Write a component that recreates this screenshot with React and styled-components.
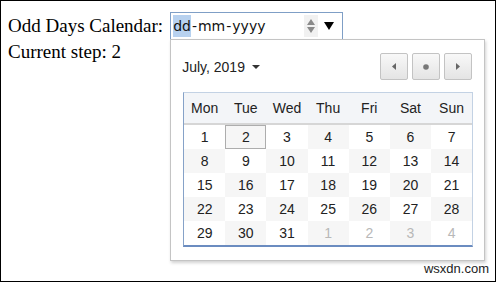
import React from 'react'
import styled, { createGlobalStyle } from 'styled-components'

const GlobalStyle = createGlobalStyle`
    html, body {
        margin: 0;
        padding: 0;
        background: #fff;
    }
`

const Frame = styled.div`
    position: relative;
    width: 496px;
    height: 282px;
    box-sizing: border-box;
    border: 1px solid #000;
    padding: 0 7px;
    font-family: "Liberation Serif", "Times New Roman", serif;
    font-size: 19px;
    color: #000;
    overflow: hidden;
`

const FieldRow = styled.div`
    display: flex;
    align-items: center;
    gap: 7px;
    margin-top: 11px;
    height: 28px;
`

const Label = styled.span`
    white-space: nowrap;
`

const DateField = styled.div`
    position: relative;
    width: 173px;
    height: 28px;
    box-sizing: border-box;
    border: 1px solid #7f9fc6;
    display: flex;
    align-items: center;
    padding-left: 2px;
    font-family: "DejaVu Sans", sans-serif;
    font-size: 14px;
    color: #111;
`

const Segment = styled.span`
    padding: 2px 0;
    background: ${({active}) => active ? '#b7d1ef' : 'transparent'};
    line-height: 18px;
`

const Dash = styled.span`
    margin: 0 1px;
`

const Spinner = styled.div`
    margin-left: auto;
    width: 14px;
    height: 22px;
    background: #f1f1f1;
    display: flex;
    flex-direction: column;
    align-items: center;
    justify-content: center;
    gap: 2px;
`

const DropArrow = styled.div`
    width: 0;
    height: 0;
    margin: 0 8px 0 6px;
    border-left: 5.5px solid transparent;
    border-right: 5.5px solid transparent;
    border-top: 8px solid #000;
`

const Popup = styled.div`
    position: absolute;
    top: 100%;
    left: -1px;
    width: 315px;
    height: 222px;
    box-sizing: border-box;
    background: #fff;
    border: 1px solid #c4c4c4;
    box-shadow: 1px 2px 3px rgba(0,0,0,0.18);
    padding: 13px 12px 0 11px;
    font-family: "Liberation Sans", Arial, sans-serif;
    z-index: 2;
`

const PopupHeader = styled.div`
    display: flex;
    align-items: center;
    justify-content: space-between;
    height: 27px;
`

const MonthLabel = styled.div`
    display: flex;
    align-items: center;
    gap: 7px;
    font-size: 14px;
    color: #222;
    padding-top: 1px;
`

const SmallCaret = styled.span`
    width: 0;
    height: 0;
    border-left: 4px solid transparent;
    border-right: 4px solid transparent;
    border-top: 4px solid #333;
`

const NavGroup = styled.div`
    display: flex;
    gap: 4px;
`

const NavButton = styled.div`
    width: 28px;
    height: 27px;
    box-sizing: border-box;
    border: 1px solid #c3c3c3;
    border-radius: 2px;
    background: linear-gradient(#f8f8f8, #e4e4e4);
    display: flex;
    align-items: center;
    justify-content: center;
`

const Grid = styled.div`
    margin-top: 12px;
    margin-left: 1px;
    width: 290px;
    box-sizing: border-box;
    border: 1px solid #c3d2e4;
    border-left-color: #86a2c8;
    border-bottom: 2px solid #6b8cc0;
    display: grid;
    grid-template-columns: repeat(7, 1fr);
`

const HeadCell = styled.div`
    height: 30px;
    background: #f3f5f8;
    border-bottom: 2px solid #d6d6d6;
    display: flex;
    align-items: center;
    justify-content: center;
    font-size: 14px;
    color: #222;
`

const DayCell = styled.div`
    height: 24px;
    box-sizing: border-box;
    display: flex;
    align-items: center;
    justify-content: center;
    font-size: 14px;
    color: ${({muted}) => muted ? '#b8b8b8' : '#222'};
    background: ${({shaded}) => shaded ? '#f6f6f6' : '#fff'};
    border: 1px solid ${({selected}) => selected ? '#adadad' : 'transparent'};
`

const Step = styled.div`
    line-height: 22px;
    margin-top: 1px;
`

const Watermark = styled.div`
    position: absolute;
    right: 6px;
    bottom: 5px;
    font-family: "Liberation Sans", Arial, sans-serif;
    font-size: 13px;
    color: #222;
`

const Tri = ({dir, color = '#888', w = 8, h = 5}) => (
  <svg width={w} height={h} viewBox={`0 0 ${w} ${h}`}>
    {dir === 'up' && <polygon points={`0,${h} ${w},${h} ${w/2},0`} fill={color} />}
    {dir === 'down' && <polygon points={`0,0 ${w},0 ${w/2},${h}`} fill={color} />}
    {dir === 'left' && <polygon points={`${w},0 ${w},${h} 0,${h/2}`} fill={color} />}
    {dir === 'right' && <polygon points={`0,0 0,${h} ${w},${h/2}`} fill={color} />}
  </svg>
)

const days = ['Mon', 'Tue', 'Wed', 'Thu', 'Fri', 'Sat', 'Sun']

const cells = [
  ...Array.from({length: 31}, (_, i) => ({n: i + 1, muted: false})),
  ...[1, 2, 3, 4].map(n => ({n, muted: true})),
]

const App = () => {
  return (
    <Frame>
        <GlobalStyle />
        <FieldRow>
            <Label>Odd Days Calendar:</Label>
            <DateField>
                <Segment active>dd</Segment>
                <Dash>-</Dash>
                <Segment>mm</Segment>
                <Dash>-</Dash>
                <Segment>yyyy</Segment>
                <Spinner>
                    <Tri dir='up' color='#8a8a8a' w={8} h={6} />
                    <Tri dir='down' color='#8a8a8a' w={8} h={6} />
                </Spinner>
                <DropArrow />
                <Popup>
                    <PopupHeader>
                        <MonthLabel>
                            July, 2019
                            <SmallCaret />
                        </MonthLabel>
                        <NavGroup>
                            <NavButton><Tri dir='left' color='#666' w={4} h={7} /></NavButton>
                            <NavButton>
                                <svg width='6' height='6' viewBox='0 0 6 6'>
                                    <circle cx='3' cy='3' r='2.8' fill='#777' />
                                </svg>
                            </NavButton>
                            <NavButton><Tri dir='right' color='#666' w={4} h={7} /></NavButton>
                        </NavGroup>
                    </PopupHeader>
                    <Grid>
                        {days.map(d => <HeadCell key={d}>{d}</HeadCell>)}
                        {cells.map((c, i) => (
                          <DayCell
                          key={i}
                          muted={c.muted}
                          shaded={i % 2 === 1}
                          selected={i === 1}
                          >
                              {c.n}
                          </DayCell>
                        ))}
                    </Grid>
                </Popup>
            </DateField>
        </FieldRow>
        <Step>Current step: 2</Step>
        <Watermark>wsxdn.com</Watermark>
    </Frame>
  )
}

export default App
